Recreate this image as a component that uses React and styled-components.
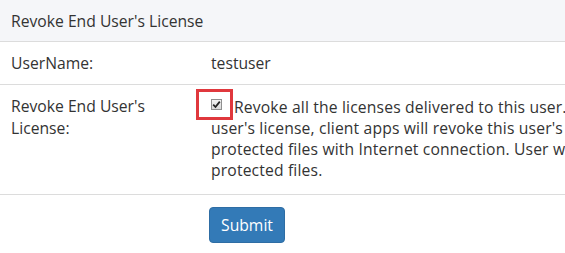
import React from 'react';
import styled, { createGlobalStyle } from 'styled-components';

const GlobalStyle = createGlobalStyle`
  html, body {
    margin: 0;
    padding: 0;
    background: #fff;
    overflow: hidden;
  }
  body {
    font-family: "Open Sans", "Noto Sans", sans-serif;
    font-size: 15.7px;
    color: #333;
  }
`;

const Panel = styled.div`
  width: 760px;
`;

const Heading = styled.div`
  height: 41px;
  display: flex;
  align-items: center;
  padding: 0 11px;
  background: #f5f6f9;
  border-bottom: 1px solid #dcdcdc;
`;

const Row = styled.div`
  display: grid;
  grid-template-columns: 211px 1fr;
  align-items: ${(p) => (p.$top ? 'start' : 'center')};
  min-height: ${(p) => p.$height || 43}px;
  padding: ${(p) => (p.$top ? '10px 0 13px' : '0')};
  border-bottom: 1px solid #dcdcdc;
  box-sizing: border-box;
  line-height: 21px;
`;

const Label = styled.div`
  padding-left: 11px;
  line-height: 22px;
`;

const Value = styled.div`
  padding-top: ${(p) => p.$shift || 0}px;
`;

const CheckWrap = styled.span`
  display: inline-flex;
  align-items: center;
  width: 37px;
  height: 31px;
  margin: -8px 1px -2px -15px;
  border: 3px solid #e0383d;
  box-sizing: border-box;
  vertical-align: top;
`;

const Check = styled.span`
  display: inline-flex;
  align-items: center;
  justify-content: center;
  width: 11px;
  height: 11px;
  margin-left: 12px;
  border: 1px solid #8f8f8f;
  background: linear-gradient(#f2f2f2, #d9d9d9);
  box-sizing: border-box;
`;

const Line = styled.span`
  display: block;
  white-space: nowrap;
  letter-spacing: 0.15px;
`;

const Footer = styled.div`
  padding: 12px 0 0 209px;
`;

const Button = styled.button`
  width: 76px;
  height: 36px;
  border: 1px solid #2e6da4;
  border-radius: 4px;
  background: #337ab7;
  color: #fff;
  font-family: "Open Sans", "Noto Sans", sans-serif;
  font-size: 15.7px;
  padding: 0;
`;

export default function App() {
  return (
    <>
      <GlobalStyle />
      <Panel>
        <Heading>Revoke End User's License</Heading>
        <Row>
          <Label>UserName:</Label>
          <Value>testuser</Value>
        </Row>
        <Row $top $height={108}>
          <Label>
            Revoke End User's
            <br />
            License:
          </Label>
          <Value $shift={2}>
            <Line>
              <CheckWrap>
                <Check role="checkbox" aria-checked="true">
                  <svg width="9" height="9" viewBox="0 0 9 9">
                    <path d="M1.2 4.6 L3.5 7 L7.8 1.6" fill="none" stroke="#222" strokeWidth="1.8" />
                  </svg>
                </Check>
              </CheckWrap>
              Revoke all the licenses delivered to this user. After revoking this
            </Line>
            <Line>user's license, client apps will revoke this user's license when opening</Line>
            <Line>protected files with Internet connection. User won't be able to open</Line>
            <Line>protected files.</Line>
          </Value>
        </Row>
        <Footer>
          <Button>Submit</Button>
        </Footer>
      </Panel>
    </>
  );
}
